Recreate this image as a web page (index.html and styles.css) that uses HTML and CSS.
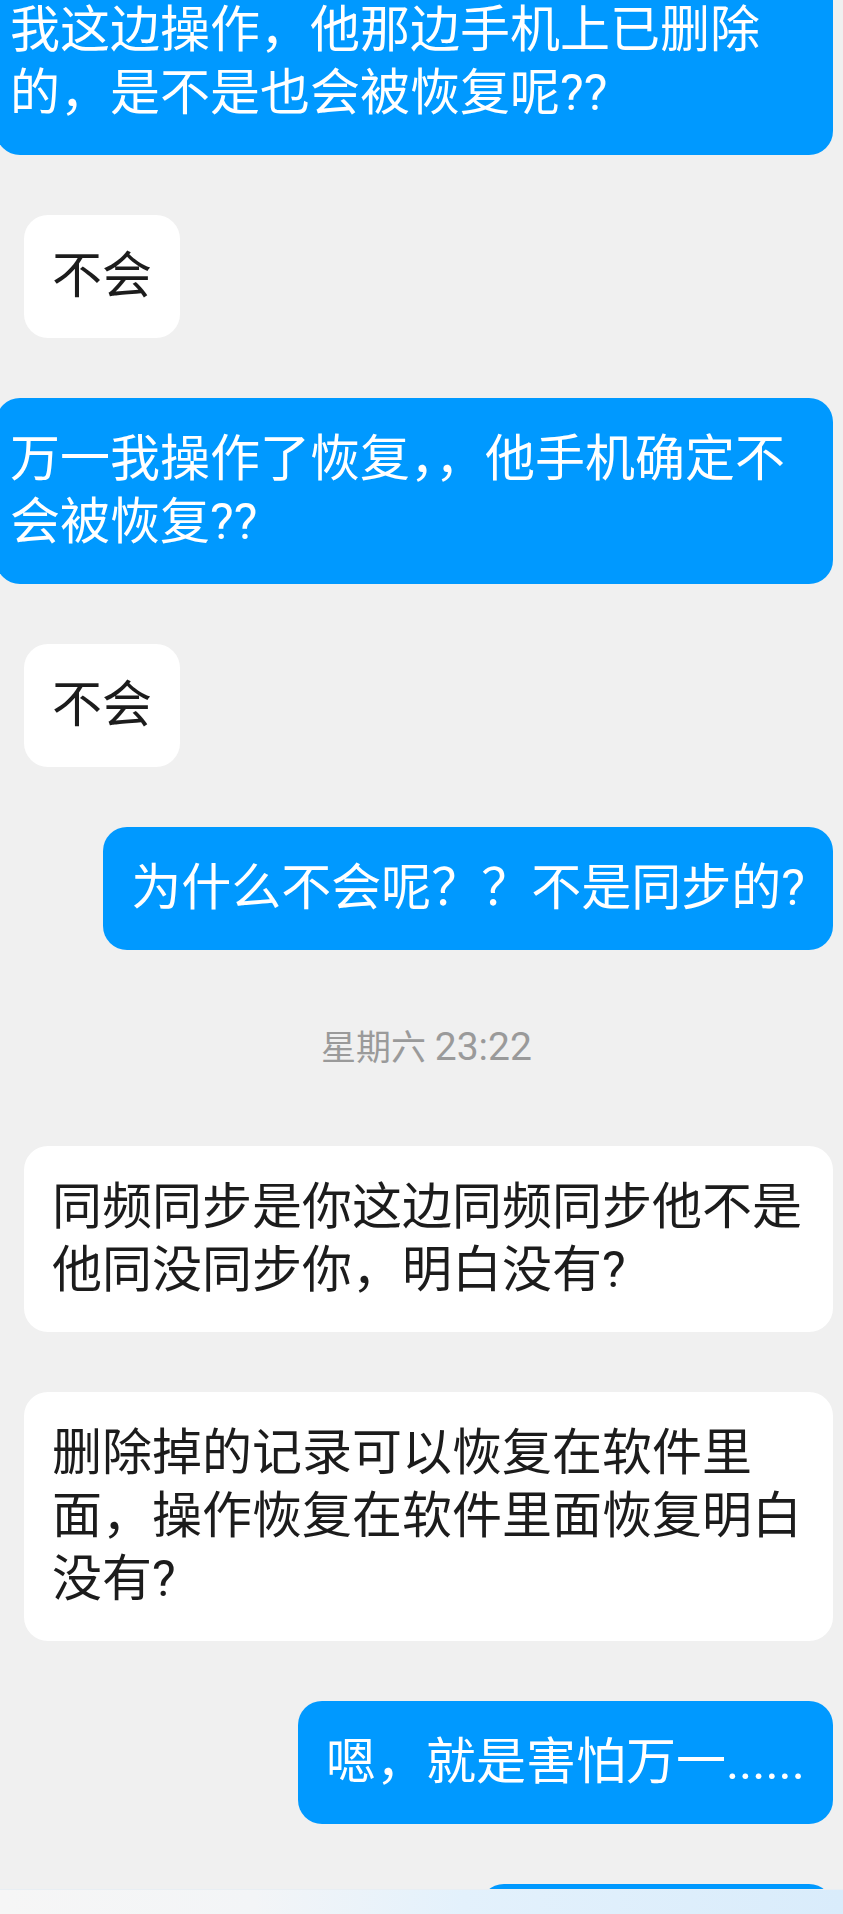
FILE: index.html
```html
<!DOCTYPE html>
<html lang="zh-CN">
  <head>
    <meta charset="UTF-8" />
    <meta name="viewport" content="width=device-width, initial-scale=1.0" />
    <title>聊天</title>
    <link rel="stylesheet" href="styles.css">
  </head>
  <body>
    <main class="chat">
      <div class="bubble sent full">我这边操作，他那边手机上已删除的，是不是也会被恢复呢??</div>
      <div class="bubble recv">不会</div>
      <div class="bubble sent full">万一我操作了恢复，，他手机确定不会被恢复??</div>
      <div class="bubble recv">不会</div>
      <div class="bubble sent">为什么不会呢？？不是同步的?</div>

      <div class="time">星期六 <span class="clock">23:22</span></div>

      <div class="bubble recv">同频同步是你这边同频同步他不是他同没同步你，明白没有?</div>
      <div class="bubble recv">删除掉的记录可以恢复在软件里面，操作恢复在软件里面恢复明白没有?</div>
      <div class="bubble sent">嗯，就是害怕万一......</div>
      <div class="bubble sent stub"></div>
    </main>
    <div class="navbar"></div>
  </body>
</html>
```

FILE: styles.css
```css
body {
  margin: 0;
  padding: 0;
  width: 843px;
  height: 1914px;
  position: relative;
  overflow: hidden;
  background: #f0f0f0;
  font-family: Roboto, "Noto Sans CJK SC", sans-serif;
  color: #1c1c1c;
}
.chat {
  display: flex;
  flex-direction: column;
  gap: 60px;
  margin: -31px 0 0 -4px;
  padding: 0 10px 0 0;
}
.bubble {
  font-size: 50px;
  line-height: 63px;
  padding: 30px 28px;
  border-radius: 24px;
  word-break: break-all;
}
.recv {
  align-self: flex-start;
  margin-left: 28px;
  background: #ffffff;
}
.sent {
  align-self: flex-end;
  background: #0099ff;
  color: #ffffff;
}
.sent.full {
  padding-left: 14px;
  padding-right: 22px;
}
.stub {
  width: 297px;
  height: 63px;
}
.time {
  align-self: center;
  margin-left: 24px;
  font-size: 35px;
  line-height: 75px;
  color: #9a9a9a;
}
.clock {
  font-size: 39px;
}
.navbar {
  position: absolute;
  left: 0;
  right: 0;
  bottom: 0;
  height: 24px;
  border-top: 1px solid #e8eef3;
  background: linear-gradient(90deg, #f6f6f6 0%, #f3f5f7 30%, #e3f1fc 55%, #d9ecfb 100%);
}
```
